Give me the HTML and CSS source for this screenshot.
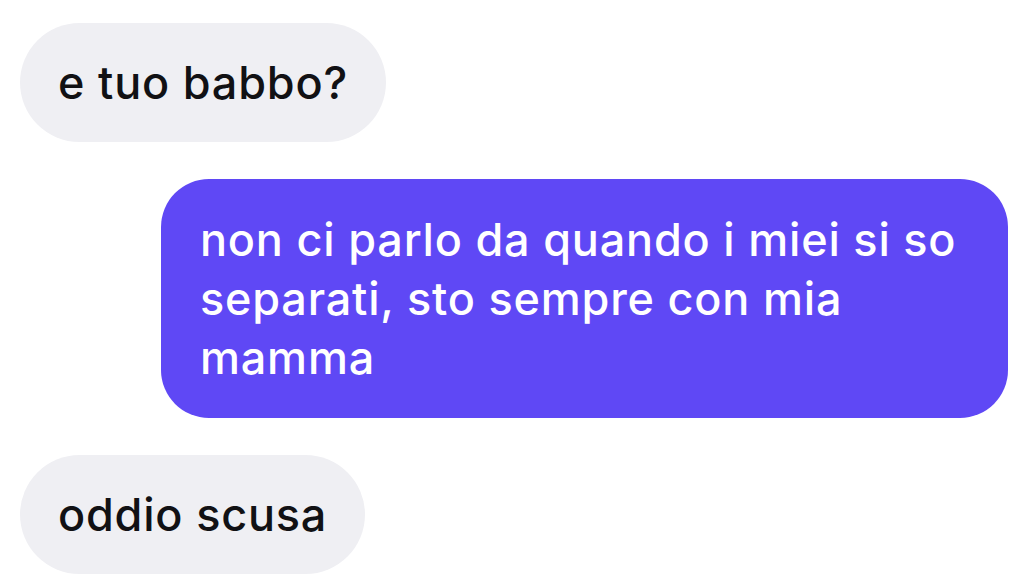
FILE: index.html
```html
<!DOCTYPE html>
<html lang="it">
<head>
<meta charset="utf-8">
<title>Chat</title>
<link rel="stylesheet" href="styles.css">
</head>
<body>
<main class="chat">
  <div class="msg msg-in">e tuo babbo?</div>
  <div class="msg msg-out">non ci parlo da quando i miei si so<br>separati, sto sempre con mia<br>mamma</div>
  <div class="msg msg-in">oddio scusa</div>
</main>
</body>
</html>
```
FILE: styles.css
```css
html, body {
  margin: 0;
  padding: 0;
  background: #ffffff;
}
.chat {
  display: flex;
  flex-direction: column;
  gap: 37px;
  padding: 23px 24px 0 20px;
  font-family: Inter, "Noto Sans", "Liberation Sans", sans-serif;
  font-size: 45px;
  font-weight: 500;
  letter-spacing: 0.8px;
  line-height: 59px;
}
.msg {
  padding: 30px 38px;
  white-space: nowrap;
}
.msg-in {
  align-self: flex-start;
  background: #efeff3;
  color: #111114;
  border-radius: 60px;
}
.msg-out {
  align-self: flex-end;
  width: 847px;
  box-sizing: border-box;
  padding: 31px 39px;
  background: #5f48f5;
  color: #ffffff;
  border-radius: 48px;
}
```
